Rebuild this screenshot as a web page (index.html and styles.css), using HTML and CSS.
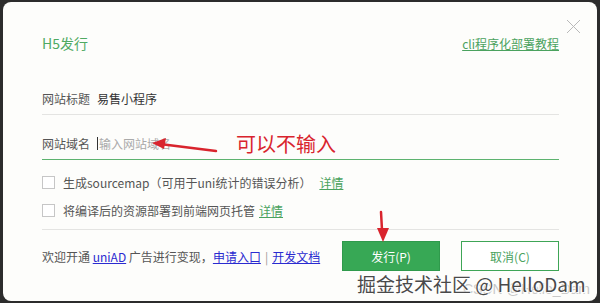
FILE: index.html
```html
<!DOCTYPE html>
<html>
  <head>
    <title>H5发行</title>
    <meta http-equiv="content-type" content="text/html;charset=utf-8">
    <link rel="stylesheet" href="styles.css">
  </head>
  <body>
    <div class="dialog">
      <a class="close" title="关闭">
        <svg width="15" height="15" viewBox="0 0 15 15"><path d="M1 1L14 14M14 1L1 14" stroke="#b9b9b9" stroke-width="1" fill="none"/></svg>
      </a>
      <div class="head">
        <span class="title">H5发行</span>
        <a class="link green">cli程序化部署教程</a>
      </div>

      <div class="field first">
        <span class="label">网站标题</span>
        <span class="value">易售小程序</span>
      </div>
      <div class="field focus">
        <span class="label">网站域名</span>
        <span class="caret"></span>
        <span class="placeholder">输入网站域名</span>
      </div>

      <div class="options">
        <label class="option"><span class="box"></span>生成sourcemap（可用于uni统计的错误分析）<a class="link green more">详情</a></label>
        <label class="option"><span class="box"></span>将编译后的资源部署到前端网页托管<a class="link green near">详情</a></label>
      </div>

      <div class="foot">
        <div class="ad">欢迎开通 <a class="link blue">uniAD</a> 广告进行变现，<a class="link blue">申请入口</a><span class="sep">|</span><a class="link blue">开发文档</a></div>
        <div class="buttons">
          <button class="btn primary">发行(P)</button>
          <button class="btn">取消(C)</button>
        </div>
      </div>

      <!-- annotations drawn over the dialog -->
      <svg class="arrows" width="600" height="303" viewBox="0 0 600 303">
        <path d="M216 151L160 144" stroke="#d9242d" stroke-width="2.5" fill="none" stroke-linecap="round"/>
        <path d="M152 143L166 138L164 149Z" fill="#d9242d"/>
        <path d="M381 212L382 230" stroke="#d9242d" stroke-width="2.5" fill="none" stroke-linecap="round"/>
        <path d="M383 242L377 228L389 228Z" fill="#d9242d"/>
      </svg>
      <span class="note">可以不输入</span>
      <span class="mark-csdn">CSDN @Hello_Dam</span>
      <span class="mark">掘金技术社区 @ HelloDam</span>
    </div>
  </body>
</html>
```

FILE: styles.css
```css
body {
  margin: 0;
  background: #2c2c2c;
  font: 12px "Noto Sans CJK SC", "Noto Sans", sans-serif;
  color: #555;
}

.dialog {
  position: relative;
  height: 299px;
  margin: 2px 3px;
  padding: 0 38px 0 39px;
  box-sizing: border-box;
  background: #fdfdfb;
  border-radius: 8px;
  display: flex;
  flex-direction: column;
}

.close {
  position: absolute;
  top: 17px;
  right: 16px;
  line-height: 0;
}

.head {
  display: flex;
  justify-content: space-between;
  align-items: center;
  height: 30px;
  margin-top: 26px;
}

.title {
  font-size: 14px;
  color: #4faa62;
}

.link {
  text-decoration: underline;
  cursor: pointer;
}

.link.green {
  color: #4aa25e;
}

.link.blue {
  color: #2b2bd0;
}

.field {
  display: flex;
  align-items: center;
  height: 32px;
  border-bottom: 1px solid #e4e4e2;
}

.field.first {
  margin-top: 24px;
}

.field.focus {
  margin-top: 12px;
  border-bottom-color: #5db36f;
}

.label {
  width: 55px;
  color: #555;
}

.value {
  color: #333;
}

.caret {
  width: 1px;
  height: 13px;
  background: #333;
  margin-right: 1px;
}

.placeholder {
  color: #aaa;
}

.options {
  margin-top: 8px;
  padding-bottom: 5px;
  border-bottom: 1px solid #e4e4e2;
}

.option {
  display: flex;
  align-items: center;
  height: 28px;
  color: #555;
}

.box {
  width: 11px;
  height: 11px;
  border: 1px solid #c6c6c6;
  background: #fff;
  margin-right: 8px;
}

.more {
  margin-left: 8px;
}

.near {
  margin-left: 4px;
}

.foot {
  display: flex;
  justify-content: space-between;
  align-items: center;
  margin-top: 11px;
}

.sep {
  color: #999;
  margin: 0 4px;
}

.buttons {
  display: flex;
  gap: 21px;
}

.btn {
  width: 98px;
  height: 30px;
  font: 12px "Noto Sans CJK SC", "Noto Sans", sans-serif;
  background: #fff;
  color: #4aa25e;
  border: 1px solid #3ea556;
  padding: 0;
}

.btn.primary {
  background: #37a855;
  color: #fff;
  border-color: #2f9a4c;
}

.arrows {
  position: absolute;
  top: -2px;
  left: -3px;
  pointer-events: none;
}

.note {
  position: absolute;
  left: 233px;
  top: 127px;
  font-size: 20px;
  line-height: 30px;
  color: #d9242d;
}

.mark-csdn {
  position: absolute;
  left: 460px;
  top: 279px;
  font: 14px "Liberation Sans", sans-serif;
  color: #c8c8c8;
}

.mark {
  position: absolute;
  left: 354px;
  top: 268px;
  font-size: 19px;
  line-height: 28px;
  color: #4a4a4a;
  text-shadow: 0 0 2px #fff, 0 0 2px #fff, 1px 1px 0 #fff;
}
```
